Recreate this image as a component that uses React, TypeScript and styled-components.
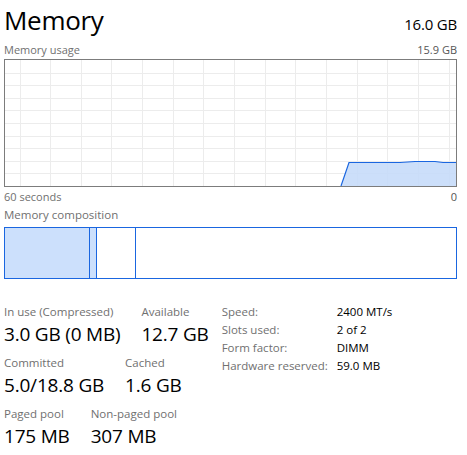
import React from "react";
import styled, { createGlobalStyle } from "styled-components";

const GlobalStyle = createGlobalStyle`
  html, body {
    margin: 0;
    padding: 0;
    background: #fff;
  }
  body {
    font-family: "Open Sans", "Noto Sans", sans-serif;
    color: #000;
  }
`;

type Stat = {
  label: string;
  value: string;
};

const statRows: Stat[][] = [
  [
    { label: "In use (Compressed)", value: "3.0 GB (0 MB)" },
    { label: "Available", value: "12.7 GB" },
  ],
  [
    { label: "Committed", value: "5.0/18.8 GB" },
    { label: "Cached", value: "1.6 GB" },
  ],
  [
    { label: "Paged pool", value: "175 MB" },
    { label: "Non-paged pool", value: "307 MB" },
  ],
];

const hardware: Stat[] = [
  { label: "Speed:", value: "2400 MT/s" },
  { label: "Slots used:", value: "2 of 2" },
  { label: "Form factor:", value: "DIMM" },
  { label: "Hardware reserved:", value: "59.0 MB" },
];

// in use, modified, standby, free (GB)
const composition = [3.0, 0.25, 1.38, 11.3];
const total = composition.reduce((a, b) => a + b, 0);

const CHART_W = 451;
const CHART_H = 126;

const Chart: React.FC = () => {
  const vLines: number[] = [];
  for (let x = 14.5; x < CHART_W; x += 30.65) vLines.push(Math.round(x) + 0.5);
  const hLines: number[] = [];
  for (let i = 1; i < 10; i++) hLines.push(Math.round((CHART_H / 10) * i) + 0.5);

  const line =
    "336,126 344,102.5 395,102.5 410,101.5 430,101.5 438,102.5 451,102.5";

  return (
    <svg width={CHART_W} height={CHART_H} viewBox={`0 0 ${CHART_W} ${CHART_H}`}>
      {vLines.map((x) => (
        <line key={"v" + x} x1={x} y1={0} x2={x} y2={CHART_H} stroke="#ececec" strokeWidth={1} />
      ))}
      {hLines.map((y) => (
        <line key={"h" + y} x1={0} y1={y} x2={CHART_W} y2={y} stroke="#ececec" strokeWidth={1} />
      ))}
      <polygon points={line + " 451,126"} fill="#c6dcfa" fillOpacity={0.9} />
      <polyline points={line} fill="none" stroke="#1a66e0" strokeWidth={1.2} />
    </svg>
  );
};

const App: React.FC = () => {
  return (
    <>
      <GlobalStyle />
      <Page>
        <Header>
          <Title>Memory</Title>
          <TotalSize>16.0 GB</TotalSize>
        </Header>
        <CaptionRow>
          <span>Memory usage</span>
          <span>15.9 GB</span>
        </CaptionRow>
        <ChartBox>
          <Chart />
        </ChartBox>
        <CaptionRow>
          <span>60 seconds</span>
          <span>0</span>
        </CaptionRow>
        <SectionLabel>Memory composition</SectionLabel>
        <CompositionBar>
          {composition.map((v, i) => (
            <Segment
              key={i}
              $filled={i < 2}
              $last={i === composition.length - 1}
              style={{ width: `${(v / total) * 100}%` }}
            />
          ))}
        </CompositionBar>
        <Stats>
          <LeftStats>
            {statRows.map((row, i) => (
              <StatRow key={i}>
                {row.map((s) => (
                  <StatItem key={s.label}>
                    <StatLabel>{s.label}</StatLabel>
                    <StatValue>{s.value}</StatValue>
                  </StatItem>
                ))}
              </StatRow>
            ))}
          </LeftStats>
          <HardwareGrid>
            {hardware.map((h) => (
              <React.Fragment key={h.label}>
                <HwLabel>{h.label}</HwLabel>
                <HwValue>{h.value}</HwValue>
              </React.Fragment>
            ))}
          </HardwareGrid>
        </Stats>
      </Page>
    </>
  );
};

const Page = styled.div`
  width: 453px;
  padding: 0 10px 0 4px;
`;

const Header = styled.div`
  display: flex;
  justify-content: space-between;
  align-items: baseline;
  height: 40px;
`;

const Title = styled.div`
  font-size: 26px;
  line-height: 40px;
  font-weight: 400;
  letter-spacing: -0.3px;
`;

const TotalSize = styled.div`
  font-size: 15px;
  letter-spacing: -0.2px;
`;

const CaptionRow = styled.div`
  display: flex;
  justify-content: space-between;
  font-size: 11px;
  line-height: 19px;
  color: #707070;
  span:last-child {
    color: #555;
  }
`;

const ChartBox = styled.div`
  border: 1px solid #7c7c7c;
  height: 126px;
  line-height: 0;
  svg {
    display: block;
  }
`;

const SectionLabel = styled.div`
  font-size: 11.5px;
  line-height: 16px;
  margin-top: 1px;
  color: #707070;
`;

const CompositionBar = styled.div`
  display: flex;
  border: 1px solid #1a66e0;
  height: 50px;
  margin-top: 4px;
`;

const Segment = styled.div<{ $filled: boolean; $last: boolean }>`
  background: ${(p) => (p.$filled ? "#cce0fc" : "#fff")};
  border-right: ${(p) => (p.$last ? "none" : "1px solid #1a66e0")};
  box-sizing: border-box;
  flex: ${(p) => (p.$last ? "1" : "none")};
`;

const Stats = styled.div`
  display: flex;
  gap: 13px;
  margin-top: 25px;
`;

const LeftStats = styled.div`
  display: flex;
  flex-direction: column;
  gap: 6px;
`;

const StatRow = styled.div`
  display: flex;
  gap: 21px;
`;

const StatItem = styled.div`
  display: flex;
  flex-direction: column;
`;

const StatLabel = styled.div`
  font-size: 11.5px;
  line-height: 16px;
  color: #707070;
`;

const StatValue = styled.div`
  font-size: 19px;
  line-height: 29px;
  letter-spacing: -0.2px;
`;

const HardwareGrid = styled.div`
  display: grid;
  grid-template-columns: 115px auto;
  grid-auto-rows: 18px;
  align-content: start;
  margin-top: -1px;
  font-size: 11.5px;
  line-height: 18px;
`;

const HwLabel = styled.div`
  color: #707070;
`;

const HwValue = styled.div`
  color: #000;
`;

export default App;
